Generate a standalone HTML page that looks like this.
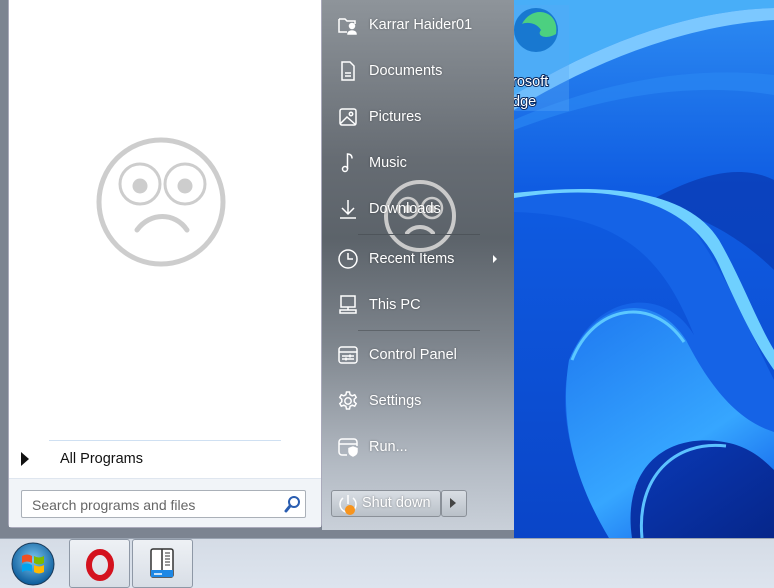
<!DOCTYPE html>
<html><head><meta charset="utf-8"><style>
*{margin:0;padding:0;box-sizing:border-box}
body{width:774px;height:588px;overflow:hidden;position:relative;font-family:"Liberation Sans",sans-serif;background:#0a4fd8}
.abs{position:absolute}
.it{position:absolute;left:337px;color:#fff;font-size:14.5px;display:flex;align-items:center;text-shadow:0 0 2px rgba(0,0,0,.35)}
.it svg{width:22px;height:22px;margin-right:10px;flex:none}
</style></head><body>
<!-- wallpaper -->
<svg class="abs" style="left:514px;top:0" width="260" height="538" viewBox="0 0 260 538">
<defs>
<linearGradient id="bg" x1="0" y1="0" x2="0" y2="1"><stop offset="0" stop-color="#2d8cf2"/><stop offset="0.35" stop-color="#0f5ce2"/><stop offset="1" stop-color="#0a45c8"/></linearGradient>
<linearGradient id="l1" x1="0" y1="0" x2="0.6" y2="1"><stop offset="0" stop-color="#1e78f0"/><stop offset="0.7" stop-color="#36a6ff"/><stop offset="1" stop-color="#1a70ee"/></linearGradient>
<linearGradient id="dk" x1="0" y1="0" x2="1" y2="1"><stop offset="0" stop-color="#0a3ab8"/><stop offset="1" stop-color="#06268a"/></linearGradient>
</defs>
<rect width="260" height="538" fill="url(#bg)"/>
<path d="M0 0 H260 V8 C180 10 90 40 0 95 Z" fill="#48aef8"/>
<path d="M0 95 C90 40 180 10 260 8 V20 C180 25 90 55 0 110 Z" fill="#7cc8ff"/>
<path d="M0 120 C80 85 170 65 260 75 V95 C170 80 80 100 0 130Z" fill="#2a86f2" opacity=".7"/>
<path d="M120 210 C170 200 230 240 260 270 V180 C220 160 170 180 120 210Z" fill="#0a3cb5" opacity=".8"/>
<path d="M0 196 C90 180 150 190 180 230 C215 280 235 330 260 380 V538 H95 C55 470 40 400 60 350 C85 295 150 285 180 335 C150 260 110 215 0 212 Z" fill="#1563e6"/>
<path d="M0 198 C100 182 175 200 205 265 C225 310 242 345 260 370 V350 C242 320 228 280 205 240 C175 192 100 182 0 193Z" fill="#6fd0ff"/>
<path d="M55 360 C80 300 140 290 172 340 C195 385 222 420 260 432 V538 H95 C60 480 45 420 55 360Z" fill="url(#l1)"/>
<path d="M58 360 C80 305 138 295 170 342" fill="none" stroke="#5cc8ff" stroke-width="3"/>
<path d="M118 538 C108 470 150 432 210 442 C235 446 250 460 260 470 V538Z" fill="url(#dk)"/>
<path d="M128 538 C122 478 160 440 212 446" fill="none" stroke="#5cc2ff" stroke-width="3"/>
<rect x="0" y="5" width="55" height="106" fill="#5aaaf5" opacity=".35"/>
<circle cx="22" cy="30" r="22" fill="#1878d0"/><path d="M8 24 C18 4 46 10 42 34 C32 40 22 36 27 30 C22 22 12 22 8 24Z" fill="#4cd080"/>
<text x="-2" y="86" fill="#fff" font-size="14.5" font-family="Liberation Sans" style="paint-order:stroke" stroke="#0a2a60" stroke-width="2">rosoft</text>
<text x="-2" y="106" fill="#fff" font-size="14.5" font-family="Liberation Sans" style="paint-order:stroke" stroke="#0a2a60" stroke-width="2">dge</text>
</svg>
<!-- left frame -->
<div class="abs" style="left:0;top:0;width:514px;height:538px;background:#7c8491"></div>
<div class="abs" style="left:8px;top:0;width:314px;height:528px;background:#fff;border-radius:0 0 4px 4px;border:1px solid #aab;border-top:0"></div>
<div class="abs" style="left:9px;top:478px;width:312px;height:49px;background:#f1f4f8;border-top:1px solid #dfe6ef"></div>
<svg class="abs" style="left:90px;top:132px" width="140" height="140">
<circle cx="71" cy="70" r="62" fill="none" stroke="#cdcdcd" stroke-width="5"/>
<circle cx="50" cy="52" r="20" fill="none" stroke="#cdcdcd" stroke-width="3"/>
<circle cx="95" cy="52" r="20" fill="none" stroke="#cdcdcd" stroke-width="3"/>
<circle cx="50" cy="54" r="7.5" fill="#cdcdcd"/><circle cx="95" cy="54" r="7.5" fill="#cdcdcd"/>
<path d="M47 98 C60 80 85 80 97 98" fill="none" stroke="#cdcdcd" stroke-width="5" stroke-linecap="round"/>
</svg>
<div class="abs" style="left:49px;top:440px;width:232px;height:1px;background:#cfe0f2"></div>
<div class="abs" style="left:21px;top:452px;width:0;height:0;border-left:8px solid #111;border-top:7px solid transparent;border-bottom:7px solid transparent"></div>
<div class="abs" style="left:60px;top:451px;font-size:14.5px;color:#111">All Programs</div>
<div class="abs" style="left:21px;top:490px;width:285px;height:28px;background:#fff;border:1px solid #aab0b8;border-radius:2px;font-size:14px;color:#666;padding:6px 10px">Search programs and files</div>
<svg class="abs" style="left:283px;top:494px" width="20" height="20"><circle cx="11" cy="8" r="5" fill="none" stroke="#2a5db0" stroke-width="2"/><path d="M7 12 L3 17" stroke="#2a5db0" stroke-width="3" stroke-linecap="round"/></svg>
<!-- right panel -->
<div class="abs" style="left:322px;top:0;width:192px;height:530px;background:linear-gradient(#8e949a 0%,#666c73 30%,#5c636a 45%,#7e858d 65%,#b4bbc4 88%,#c9d0d9 100%)"></div>
<svg class="abs" style="left:380px;top:178px" width="80" height="76">
<g fill="none" stroke="#cacaca"><circle cx="40" cy="38" r="34" stroke-width="4"/><circle cx="28" cy="30" r="10" stroke-width="2.5"/><circle cx="52" cy="30" r="10" stroke-width="2.5"/><path d="M27 55c7-8 19-8 26 0" stroke-width="4" stroke-linecap="round"/></g>
<circle cx="28" cy="31" r="4" fill="#cacaca"/><circle cx="52" cy="31" r="4" fill="#cacaca"/>
</svg>
<div class="it" style="top:14px"><svg viewBox="0 0 22 22" fill="none" stroke="#fff" stroke-width="1.5"><path d="M2 5h6l2 2h8v3M2 5v13h8"/><circle cx="15" cy="12" r="2.5" fill="#fff"/><path d="M11 20c0-4 8-4 8 0z" fill="#fff"/></svg>Karrar Haider01</div>
<div class="it" style="top:60px"><svg viewBox="0 0 22 22" fill="none" stroke="#fff" stroke-width="1.5"><path d="M5 2h8l4 4v14H5z"/><path d="M8 13h6M8 16h6"/></svg>Documents</div>
<div class="it" style="top:106px"><svg viewBox="0 0 22 22" fill="none" stroke="#fff" stroke-width="1.5"><rect x="3" y="3" width="16" height="16" rx="2"/><circle cx="14" cy="8" r="1.7"/><path d="M3 18l7-7 9 8"/></svg>Pictures</div>
<div class="it" style="top:152px"><svg viewBox="0 0 22 22" fill="none" stroke="#fff" stroke-width="1.5"><circle cx="8" cy="17" r="2.5"/><path d="M10.5 17V2c2.5 0 4.5 1 4.5 4.5"/></svg>Music</div>
<div class="it" style="top:198px"><svg viewBox="0 0 22 22" fill="none" stroke="#fff" stroke-width="1.5"><path d="M11 2v14M5 10l6 6 6-6M3 20h16"/></svg>Downloads</div>
<div class="abs" style="left:358px;top:234px;width:122px;height:1px;background:#4e545a"></div>
<div class="it" style="top:248px"><svg viewBox="0 0 22 22" fill="none" stroke="#fff" stroke-width="1.5"><circle cx="11" cy="11" r="9"/><path d="M11 5v6h5"/></svg>Recent Items</div>
<div class="abs" style="left:493px;top:255px;border-left:4px solid #fff;border-top:4px solid transparent;border-bottom:4px solid transparent"></div>
<div class="it" style="top:294px"><svg viewBox="0 0 22 22" fill="none" stroke="#fff" stroke-width="1.5"><rect x="4" y="2" width="14" height="11"/><path d="M11 13v3M3 16h16v3H3z"/></svg>This PC</div>
<div class="abs" style="left:358px;top:330px;width:122px;height:1px;background:#5e646a"></div>
<div class="it" style="top:344px"><svg viewBox="0 0 22 22" fill="none" stroke="#fff" stroke-width="1.5"><rect x="2" y="3" width="18" height="16" rx="2.5"/><path d="M2 8h18M5 12h12M5 15h12"/><path d="M13 10.5v3M9 13.5v3"/></svg>Control Panel</div>
<div class="it" style="top:390px"><svg viewBox="0 0 22 22" fill="none" stroke="#fff" stroke-width="1.5"><circle cx="11" cy="11" r="3.2"/><path d="M9.5 2h3l.6 2.7 2.1 1.1 2.5-1 1.5 2.6-2 1.9v2.4l2 1.9-1.5 2.6-2.5-1-2.1 1.1-.6 2.7h-3l-.6-2.7-2.1-1.1-2.5 1-1.5-2.6 2-1.9V9.3l-2-1.9 1.5-2.6 2.5 1 2.1-1.1z"/></svg>Settings</div>
<div class="it" style="top:436px"><svg viewBox="0 0 22 22" fill="none" stroke="#fff" stroke-width="1.5"><path d="M10 19H5a3 3 0 0 1-3-3V6a3 3 0 0 1 3-3h12a3 3 0 0 1 3 3v4M2 8h18"/><path d="M12 12.5l4-1.5 4 1.5v3c0 2.2-2.2 3.8-4 4.5-1.8-.7-4-2.3-4-4.5z" fill="#fff"/></svg>Run...</div>
<div class="abs" style="left:331px;top:490px;width:110px;height:27px;border:1px solid #8a9098;border-radius:3px;background:linear-gradient(#d9dee4,#b9c0c8);"></div>
<div class="abs" style="left:441px;top:490px;width:26px;height:27px;border:1px solid #8a9098;border-radius:3px;background:linear-gradient(#d9dee4,#b9c0c8);"></div>
<div class="abs" style="left:450px;top:498px;border-left:6px solid #444;border-top:5px solid transparent;border-bottom:5px solid transparent"></div>
<svg class="abs" style="left:336px;top:492px" width="24" height="24"><path d="M7 6a8 8 0 1 0 10 0" fill="none" stroke="#fff" stroke-width="1.5"/><path d="M12 3v9" stroke="#fff" stroke-width="1.5"/><circle cx="14" cy="18" r="5" fill="#f7941d"/></svg>
<div class="abs" style="left:362px;top:495px;font-size:14.5px;color:#fff;text-shadow:0 0 2px rgba(0,0,0,.4)">Shut down</div>
<!-- taskbar -->
<div class="abs" style="left:0;top:538px;width:774px;height:50px;background:linear-gradient(#d5dce6,#dde4ee);border-top:1px solid #9aa4b2"></div>
<svg class="abs" style="left:10px;top:541px" width="46" height="46">
<defs><radialGradient id="orb" cx="50%" cy="40%" r="60%"><stop offset="0" stop-color="#7cc7f0"/><stop offset="1" stop-color="#0a5a9a"/></radialGradient></defs>
<circle cx="23" cy="23" r="21" fill="url(#orb)" stroke="#1b3b5a"/>
<path d="M12 15q5-3 10 0v7q-5-3-10 0z" fill="#f25022"/><path d="M24 15q5 3 10 0v7q-5 3-10 0z" fill="#7fba00"/>
<path d="M12 24q5-3 10 0v7q-5-3-10 0z" fill="#00a4ef"/><path d="M24 24q5 3 10 0v7q-5 3-10 0z" fill="#ffb900"/>
</svg>
<div class="abs" style="left:69px;top:539px;width:61px;height:49px;border:1px solid #8e98a6;border-radius:3px;background:linear-gradient(#eef1f5,#d8dee6)"></div>
<div class="abs" style="left:132px;top:539px;width:61px;height:49px;border:1px solid #8e98a6;border-radius:3px;background:linear-gradient(#eef1f5,#d8dee6)"></div>
<svg class="abs" style="left:85px;top:549px" width="30" height="32"><ellipse cx="15" cy="16" rx="11" ry="13" fill="none" stroke="#d4121e" stroke-width="6"/></svg>
<svg class="abs" style="left:148px;top:547px" width="30" height="34"><rect x="3" y="2" width="22" height="28" rx="2" fill="#fff" stroke="#333" stroke-width="1.5"/><path d="M14 2v21" stroke="#333" stroke-width="1.5"/><path d="M17 6h5M17 9h5M17 12h5M17 15h5M17 18h5" stroke="#333"/><rect x="3" y="23" width="22" height="7" fill="#1e88e5"/><path d="M6 27h8" stroke="#fff" stroke-width="1.5"/></svg>
</body></html>
